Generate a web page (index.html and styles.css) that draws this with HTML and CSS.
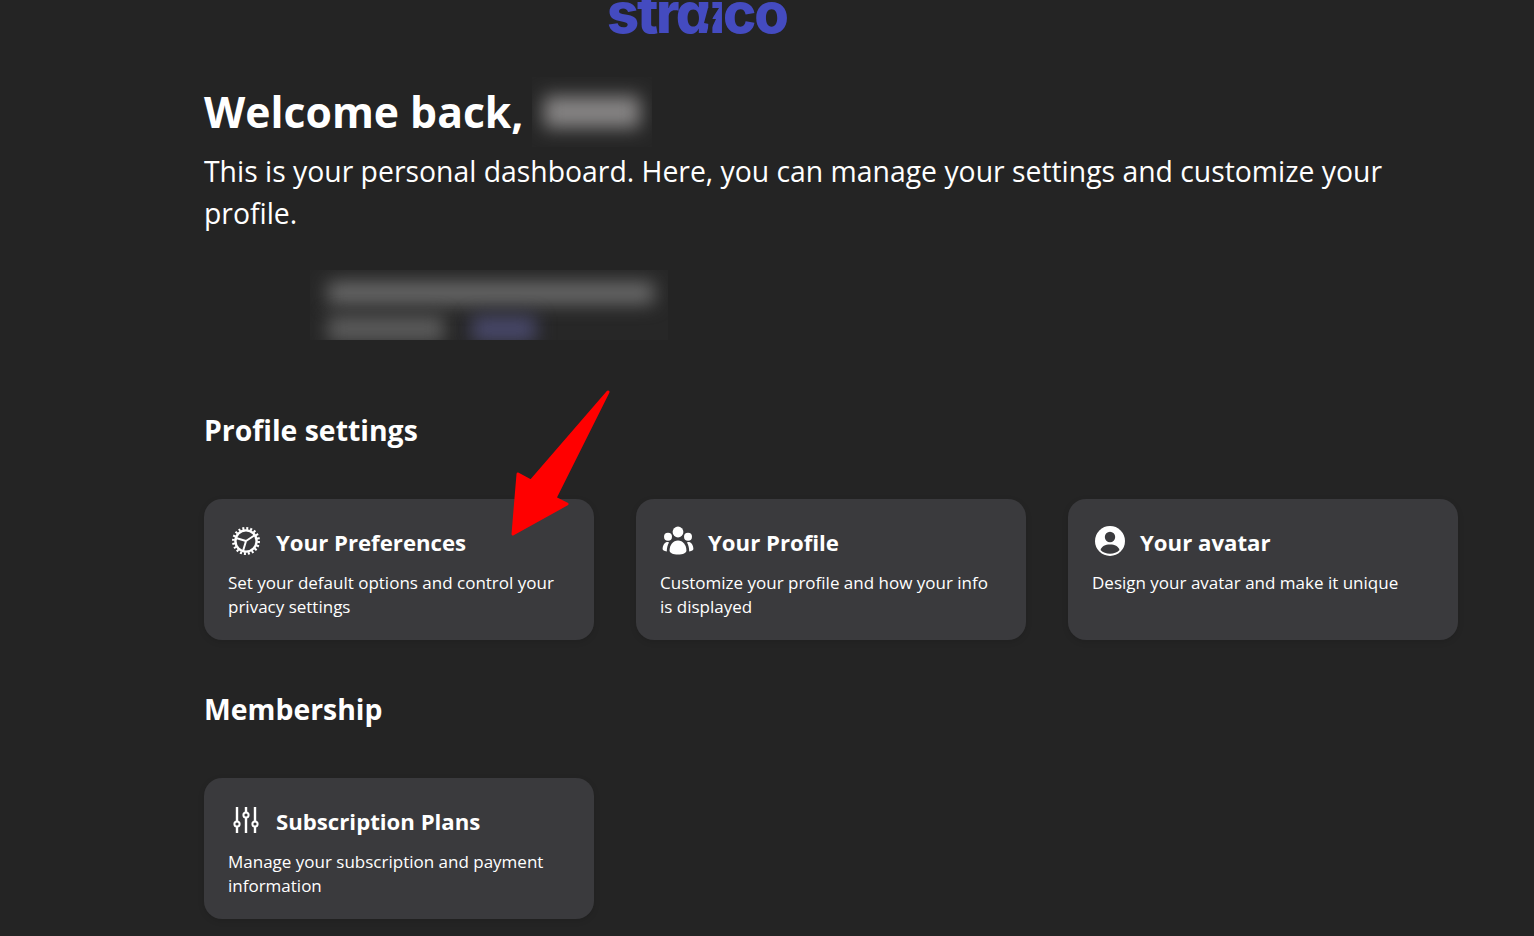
FILE: index.html
```html
<!DOCTYPE html>
<html lang="en">
<head>
  <meta charset="UTF-8" />
  <meta name="viewport" content="width=device-width, initial-scale=1" />
  <title>Dashboard</title>
  <link rel="stylesheet" href="styles.css">
</head>
<body>
  <header class="logo-bar">
    <div class="logo">straico</div>
    <svg class="logo-bolt" viewBox="0 0 20 30">
      <path d="M16 0 L9 11 L13 11 L5 28 L3 28 L6 16 L1 15 L5 0 Z" fill="#242424" />
    </svg>
  </header>

  <main class="container">
    <div class="welcome">
      <h1 class="welcome-title">Welcome back,</h1>
      <div class="blur-name"><span class="blur-name-text"></span></div>
    </div>
    <p class="intro">This is your personal dashboard. Here, you can manage your settings and customize your profile.</p>

    <div class="blur-account">
      <div class="blur-line-one"></div>
      <div class="blur-line-two"><span></span><span class="blur-link"></span></div>
    </div>

    <!-- Profile settings -->
    <section class="settings-block">
      <h2 class="section-header">Profile settings</h2>
      <div class="card-grid">
        <a class="card" href="#">
          <div class="card-head">
            <svg class="card-icon" viewBox="0 0 32 32" fill="none" stroke="#fff">
              <circle cx="16" cy="16" r="10.6" stroke-width="2.4" />
              <circle cx="16" cy="16" r="12.6" stroke-width="2.8" stroke-dasharray="2 1.95" />
              <path d="M16 16 L6 13 M16 16 L13 26 M16 16 L25 10" stroke-width="2" />
            </svg>
            <h3 class="card-title">Your Preferences</h3>
          </div>
          <p class="card-text">Set your default options and control your privacy settings</p>
        </a>

        <a class="card" href="#">
          <div class="card-head">
            <svg class="card-icon" viewBox="0 0 32 32" fill="#fff">
              <circle cx="16" cy="7" r="5.4" />
              <circle cx="6" cy="11.7" r="4" />
              <circle cx="26" cy="11.7" r="4" />
              <path d="M16 15.5 C11 15.5 7.6 20 7.6 25.5 C7.6 28 11 29.5 16 29.5 C21 29.5 24.4 28 24.4 25.5 C24.4 20 21 15.5 16 15.5 Z" />
              <path d="M4.6 17 C2 18 0.6 21 0.6 24 C0.6 25 2 26 4.8 26.4 C4.8 23 5.5 19.8 7 17.4 C6.2 17 5.4 16.9 4.6 17 Z" />
              <path d="M27.4 17 C30 18 31.4 21 31.4 24 C31.4 25 30 26 27.2 26.4 C27.2 23 26.5 19.8 25 17.4 C25.8 17 26.6 16.9 27.4 17 Z" />
            </svg>
            <h3 class="card-title">Your Profile</h3>
          </div>
          <p class="card-text">Customize your profile and how your info is displayed</p>
        </a>

        <a class="card" href="#">
          <div class="card-head">
            <svg class="card-icon" viewBox="0 0 32 32">
              <circle cx="16" cy="16" r="15" fill="#fff" />
              <circle cx="16" cy="12" r="5.2" fill="#3a3a3d" />
              <path d="M6.5 25 C8 21 11 19.5 16 19.5 C21 19.5 24 21 25.5 25 C23 27.6 19.8 28.8 16 28.8 C12.2 28.8 9 27.6 6.5 25 Z" fill="#3a3a3d" />
            </svg>
            <h3 class="card-title">Your avatar</h3>
          </div>
          <p class="card-text">Design your avatar and make it unique</p>
        </a>
      </div>
    </section>

    <!-- Membership -->
    <section class="settings-block membership">
      <h2 class="section-header">Membership</h2>
      <div class="card-grid">
        <a class="card" href="#">
          <div class="card-head">
            <svg class="card-icon" viewBox="0 0 32 32" fill="#3a3a3d" stroke="#fff" stroke-width="2.4">
              <path d="M7 3 V29 M16 3 V29 M25 3 V29" />
              <circle cx="7" cy="20" r="2.6" stroke-width="2" />
              <circle cx="16" cy="11" r="2.6" stroke-width="2" />
              <circle cx="25" cy="20" r="2.6" stroke-width="2" />
            </svg>
            <h3 class="card-title">Subscription Plans</h3>
          </div>
          <p class="card-text">Manage your subscription and payment information</p>
        </a>
      </div>
    </section>
  </main>

  <!-- annotation drawn over the screenshot -->
  <svg class="arrow" viewBox="0 0 110 160">
    <path d="M104 4 L51 110 L63 116 L9 146 L14 86 L27 93 Z" fill="#ff0000" stroke="#ff0000" stroke-width="3" stroke-linejoin="round" />
  </svg>
</body>
</html>
```

FILE: styles.css
```css
* {
  box-sizing: border-box;
}

html, body {
  margin: 0;
  padding: 0;
}

body {
  position: relative;
  height: 936px;
  overflow: hidden;
  background-color: #242424;
  color: #fff;
  font-family: 'Open Sans', 'Noto Sans', Arial, sans-serif;
}

/* Logo, cut off by the top of the window */
.logo-bar {
  position: relative;
  height: 40px;
  padding-left: 607px;
  overflow: hidden;
}

.logo {
  margin-top: -18px;
  font-family: 'Inter', Arial, sans-serif;
  font-feature-settings: 'cv11' 1;
  font-size: 56px;
  line-height: 62px;
  font-weight: 800;
  letter-spacing: -2.2px;
  color: #444bc0;
}

.logo-bolt {
  position: absolute;
  left: 703px;
  top: 8px;
  width: 20px;
  height: 30px;
}

.container {
  padding: 40px 76px 0 204px;
}

/* Welcome */
.welcome {
  display: flex;
  align-items: center;
  gap: 8px;
  height: 64px;
}

.welcome-title {
  margin: 0;
  font-size: 42.7px;
  line-height: 64px;
  font-weight: 700;
}

.blur-name {
  width: 120px;
  height: 70px;
  display: flex;
  align-items: center;
  justify-content: center;
  background: #262626;
  overflow: hidden;
}

.blur-name-text {
  width: 96px;
  height: 32px;
  background: #868484;
  filter: blur(9px);
}

.intro {
  margin: 6px 0 0;
  font-size: 28.35px;
  line-height: 42px;
  font-weight: 400;
}

/* Blurred account details */
.blur-account {
  width: 358px;
  height: 70px;
  margin: 36px 0 0 106px;
  padding: 12px 14px 0 18px;
  background: #272727;
  overflow: hidden;
}

.blur-line-one {
  height: 22px;
  background: #6a6a6a;
  filter: blur(9px);
}

.blur-line-two {
  display: flex;
  gap: 28px;
  margin-top: 12px;
}

.blur-line-two span {
  width: 116px;
  height: 26px;
  background: #5c5c5c;
  filter: blur(9px);
}

.blur-line-two .blur-link {
  width: 64px;
  background: #48486a;
}

/* Sections */
.settings-block {
  margin-top: 65px;
}

.membership {
  margin-top: 44px;
}

.section-header {
  margin: 0 0 44px;
  font-size: 28.4px;
  line-height: 50px;
  font-weight: 700;
}

/* Cards */
.card-grid {
  display: grid;
  grid-template-columns: repeat(3, 390px);
  gap: 42px;
}

.card {
  display: block;
  height: 141px;
  padding: 24px 24px 0;
  background: #3a3a3d;
  border-radius: 18px;
  box-shadow: 0 2px 6px rgba(0, 0, 0, 0.12);
  color: #fff;
  text-decoration: none;
}

.card-head {
  display: flex;
  align-items: center;
  gap: 13px;
  height: 38px;
  margin-top: -1px;
}

.card-icon {
  flex: none;
  width: 34px;
  height: 32px;
  margin: -1px 0 0 1px;
}

.card-title {
  margin: 3px 0 0;
  font-size: 22.2px;
  line-height: 38px;
  font-weight: 700;
}

.card-text {
  margin: 11px 0 0;
  font-size: 17px;
  line-height: 24px;
}

.arrow {
  position: absolute;
  left: 504px;
  top: 388px;
  width: 110px;
  height: 160px;
}
```
